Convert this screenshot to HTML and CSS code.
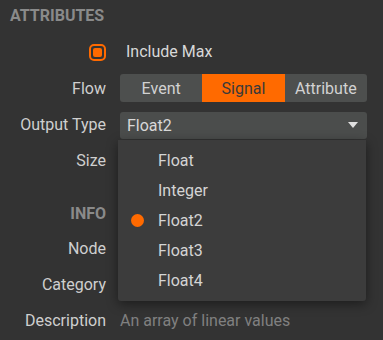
FILE: index.html
```html
<!DOCTYPE html>
<html>
<head>
<meta charset="utf-8">
<link rel="stylesheet" href="styles.css">
</head>
<body>
<div class="panel">
  <div class="heading">ATTRIBUTES</div>
  <div class="row row-check">
    <div class="label"><span class="checkbox"><span class="checkbox-fill"></span></span></div>
    <div class="value check-text">Include Max</div>
  </div>
  <div class="row">
    <div class="label">Flow</div>
    <div class="value">
      <div class="segmented">
        <div class="seg">Event</div>
        <div class="seg seg-active">Signal</div>
        <div class="seg">Attribute</div>
      </div>
    </div>
  </div>
  <div class="row">
    <div class="label">Output Type</div>
    <div class="value">
      <div class="select">
        <span>Float2</span>
        <span class="arrow"></span>
        <div class="menu">
          <div class="item">Float</div>
          <div class="item">Integer</div>
          <div class="item selected"><span class="dot"></span>Float2</div>
          <div class="item">Float3</div>
          <div class="item">Float4</div>
        </div>
      </div>
    </div>
  </div>
  <div class="row">
    <div class="label">Size</div>
    <div class="value"></div>
  </div>
  <div class="row row-info">
    <div class="label section">INFO</div>
    <div class="value"></div>
  </div>
  <div class="row">
    <div class="label">Node</div>
    <div class="value"></div>
  </div>
  <div class="row">
    <div class="label">Category</div>
    <div class="value"></div>
  </div>
  <div class="row">
    <div class="label">Description</div>
    <div class="value muted">An array of linear values</div>
  </div>
</div>
</body>
</html>
```

FILE: styles.css
```css
html, body {
  margin: 0;
  padding: 0;
  background: #333333;
  width: 383px;
  height: 340px;
  overflow: hidden;
}

body {
  font-family: Roboto, "Liberation Sans", sans-serif;
  font-size: 16px;
  color: #d2d2d2;
}

.panel {
  display: flex;
  flex-direction: column;
  padding: 0 16px 0 10px;
}

.heading {
  height: 32px;
  line-height: 32px;
  font-weight: bold;
  font-size: 16px;
  color: #8a8a8a;
}

.row {
  display: grid;
  grid-template-columns: 96px 1fr;
  column-gap: 14px;
  align-items: center;
  height: 36px;
}

.row-check {
  height: 38px;
}

.row-info {
  margin-top: 18px;
  height: 34px;
}

.label {
  text-align: right;
  color: #cfcfcf;
  white-space: nowrap;
}

.section {
  font-weight: bold;
  color: #8a8a8a;
}

.value {
  min-width: 0;
}

.muted {
  color: #808080;
  white-space: nowrap;
}

.check-text {
  padding-left: 6px;
  color: #d8d8d8;
}

.checkbox {
  display: inline-flex;
  align-items: center;
  justify-content: center;
  box-sizing: border-box;
  width: 17px;
  height: 17px;
  border: 2px solid #ff6a00;
  border-radius: 5px;
  vertical-align: middle;
}

.checkbox-fill {
  width: 9px;
  height: 9px;
  border-radius: 2px;
  background: #ff6a00;
}

.segmented {
  display: flex;
  height: 28px;
  border-radius: 3px;
  overflow: hidden;
  background: #4d4f4e;
}

.seg {
  flex: 1;
  display: flex;
  align-items: center;
  justify-content: center;
  color: #d2d2d2;
}

.seg-active {
  background: #ff6a00;
  color: #3a3a3a;
}

.select {
  position: relative;
  display: flex;
  align-items: center;
  justify-content: space-between;
  height: 27px;
  margin-top: 2px;
  padding: 0 9px 0 7px;
  background: #4b4d4c;
  border-radius: 3px;
  color: #d8d8d8;
}

.arrow {
  width: 0;
  height: 0;
  border-left: 5.5px solid transparent;
  border-right: 5.5px solid transparent;
  border-top: 6px solid #e0e0e0;
}

.menu {
  position: absolute;
  top: 28px;
  left: -2px;
  width: 248px;
  padding: 6px 0 5px;
  background: #3c3c3c;
  border-radius: 0 0 3px 3px;
  box-shadow: 0 3px 12px rgba(0, 0, 0, 0.45);
  z-index: 10;
}

.item {
  position: relative;
  height: 30px;
  line-height: 30px;
  padding-left: 40px;
  color: #d4d4d4;
}

.dot {
  position: absolute;
  left: 13px;
  top: 8px;
  width: 13px;
  height: 13px;
  border-radius: 50%;
  background: #ff6a00;
}
```
